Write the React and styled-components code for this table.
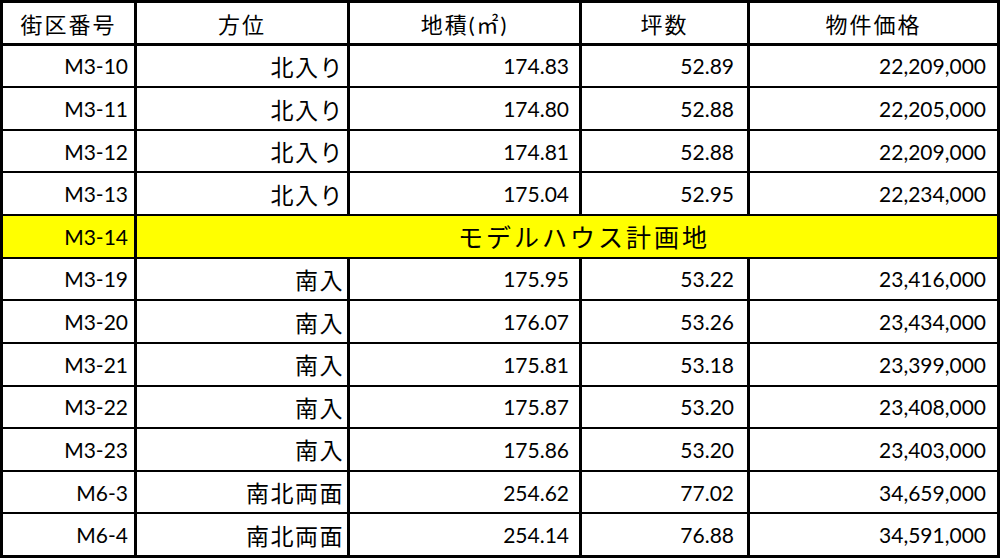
import React from "react";
import styled, { createGlobalStyle } from "styled-components";

const GlobalStyle = createGlobalStyle`
  html, body {
    margin: 0;
    padding: 0;
    background: #ffffff;
  }
`;

const Grid = styled.div`
  box-sizing: border-box;
  width: 1000px;
  height: 558px;
  display: grid;
  grid-template-columns: 131px 210px 229px 165px 247px;
  grid-template-rows: repeat(13, 1fr);
  column-gap: 3px;
  row-gap: 2px;
  padding: 3px;
  background: #000;
  font-family: Lato, "Noto Sans CJK JP", sans-serif;
  font-size: 21px;
  color: #000;
`;

const HeadCell = styled.div`
  background: #fff;
  display: flex;
  align-items: center;
  justify-content: center;
  border-bottom: 1px solid #000;
  font-size: 22px;
  letter-spacing: 2px;
`;

const Cell = styled.div`
  background: ${(p) => (p.$highlight ? "#ffff00" : "#fff")};
  display: flex;
  align-items: center;
  justify-content: flex-end;
  padding: 0 ${(p) => p.$pad || 8}px 0 0;
  font-size: ${(p) => (p.$jp ? "23px" : "21px")};
  letter-spacing: ${(p) => (p.$jp ? "1.5px" : "0")};
  white-space: nowrap;
`;

const MergedCell = styled.div`
  grid-column: span 4;
  background: #ffff00;
  display: flex;
  align-items: center;
  justify-content: center;
  padding-left: 34px;
  font-size: 25px;
  letter-spacing: 3px;
`;

const headers = ["街区番号", "方位", "地積(㎡)", "坪数", "物件価格"];

const rows = [
  ["M3-10", "北入り", "174.83", "52.89", "22,209,000"],
  ["M3-11", "北入り", "174.80", "52.88", "22,205,000"],
  ["M3-12", "北入り", "174.81", "52.88", "22,209,000"],
  ["M3-13", "北入り", "175.04", "52.95", "22,234,000"],
  ["M3-14", null],
  ["M3-19", "南入", "175.95", "53.22", "23,416,000"],
  ["M3-20", "南入", "176.07", "53.26", "23,434,000"],
  ["M3-21", "南入", "175.81", "53.18", "23,399,000"],
  ["M3-22", "南入", "175.87", "53.20", "23,408,000"],
  ["M3-23", "南入", "175.86", "53.20", "23,403,000"],
  ["M6-3", "南北両面", "254.62", "77.02", "34,659,000"],
  ["M6-4", "南北両面", "254.14", "76.88", "34,591,000"],
];

export default function App() {
  return (
    <>
      <GlobalStyle />
      <Grid>
        {headers.map((h) => (
          <HeadCell key={h}>{h}</HeadCell>
        ))}
        {rows.map((r) =>
          r[1] === null ? (
            <React.Fragment key={r[0]}>
              <Cell $highlight $pad={6}>{r[0]}</Cell>
              <MergedCell>モデルハウス計画地</MergedCell>
            </React.Fragment>
          ) : (
            <React.Fragment key={r[0]}>
              <Cell $pad={6}>{r[0]}</Cell>
              <Cell $jp $pad={3}>{r[1]}</Cell>
              <Cell $pad={10}>{r[2]}</Cell>
              <Cell $pad={13}>{r[3]}</Cell>
              <Cell $pad={11}>{r[4]}</Cell>
            </React.Fragment>
          )
        )}
      </Grid>
    </>
  );
}
